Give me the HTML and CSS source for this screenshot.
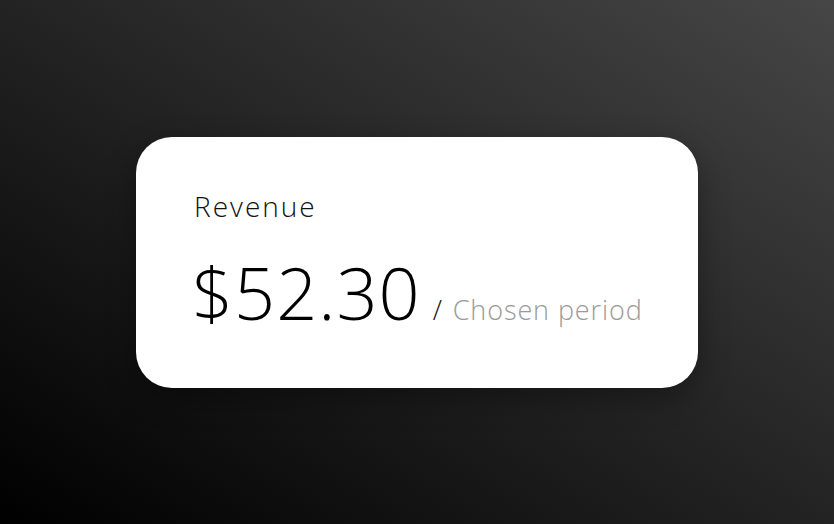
FILE: index.html
```html
<!DOCTYPE html>
<html lang="en">
<head>
  <meta charset="UTF-8" />
  <title>Revenue</title>
  <meta name="viewport" content="width=device-width, initial-scale=1.0"/>
  <link rel="stylesheet" href="styles.css">
</head>
<body>
  <div class="card">
    <div class="label">Revenue</div>
    <div class="value">
      <span class="amount">$52.30</span>
      <span class="period">/ <span class="period-name">Chosen period</span></span>
    </div>
  </div>
</body>
</html>
```
FILE: styles.css
```css
html, body {
  height: 100%;
}

body {
  margin: 0;
  font-family: 'Open Sans', 'Noto Sans', sans-serif;
  font-weight: 300;
  background: linear-gradient(to top right, #000000, #464646);
  display: flex;
  align-items: center;
  justify-content: center;
}

.card {
  width: 562px;
  height: 251px;
  box-sizing: border-box;
  padding: 52px 30px 0 58px;
  background-color: #ffffff;
  border-radius: 36px;
  box-shadow: 0 10px 30px rgba(0,0,0,0.35);
}

.label {
  font-size: 28px;
  line-height: 34px;
  letter-spacing: 2px;
  color: #111;
}

.value {
  margin-top: 29px;
  display: flex;
  align-items: baseline;
  gap: 12px;
  white-space: nowrap;
}

.amount {
  font-size: 72px;
  line-height: 80px;
  letter-spacing: 1px;
  margin-left: -2px;
  color: #000;
}

.period {
  font-size: 27px;
  letter-spacing: 0.9px;
  color: #111;
}

.period-name {
  color: #9a9a9a;
  margin-left: 2px;
}
```
